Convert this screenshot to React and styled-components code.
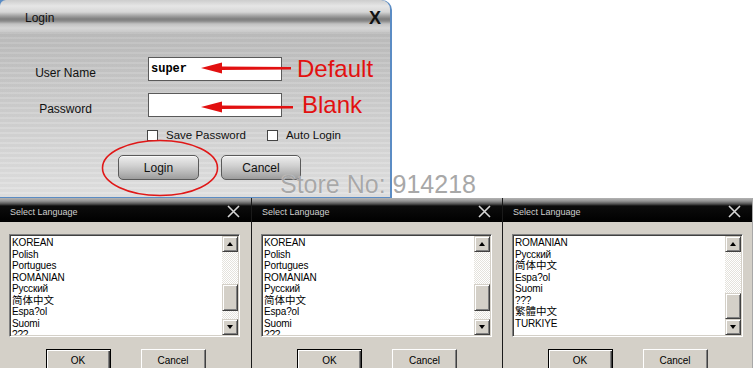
import React from 'react';
import styled, { createGlobalStyle } from 'styled-components';

const Global = createGlobalStyle`
  html, body { margin: 0; padding: 0; background: #fff; }
  #root { width: 755px; height: 368px; overflow: hidden; }
`;

const Page = styled.div`
  position: relative;
  width: 755px;
  height: 368px;
  overflow: hidden;
  background: #fff;
  display: flex;
  flex-direction: column;
  font-family: "Liberation Sans", Arial, sans-serif;
`;

const TopRow = styled.div`
  display: flex;
  height: 198px;
  flex: none;
`;

const Frame = styled.div`
  width: 392px;
  height: 198px;
  box-sizing: border-box;
  background: #5b8cc4;
  border-top-right-radius: 10px;
  padding: 0 2px 1px 0;
`;

const LoginDialog = styled.div`
  position: relative;
  height: 100%;
  border-top-left-radius: 6px;
  border-top-right-radius: 9px;
  overflow: hidden;
  display: flex;
  flex-direction: column;
`;

const LoginTitle = styled.div`
  height: 32px;
  flex: none;
  box-sizing: border-box;
  display: flex;
  align-items: center;
  justify-content: space-between;
  padding: 3px 9px 0 25px;
  background: linear-gradient(180deg, #cdcdcd 0, #e6e6e6 6px, #d6d6d6 12px, #a0a0a0 16px, #7e7e7e 19px, #8a8a8a 21px, #c2c2c2 24px, #d6d6d6 28px, #c9c9c9 32px);
  font-size: 12px;
  color: #111;
`;

const CloseX = styled.span`
  font-size: 18px;
  font-weight: bold;
  color: #111;
  line-height: 1;
`;

const LoginBody = styled.div`
  flex: 1;
  padding-top: 25px;
  display: flex;
  flex-direction: column;
  background:
    repeating-linear-gradient(180deg, rgba(255,255,255,0.07) 0 2px, rgba(0,0,0,0.025) 2px 5px),
    linear-gradient(180deg, #bdbdbd 0%, #cfcfcf 45%, #e2e2e2 100%);
`;

const FormGrid = styled.div`
  display: grid;
  grid-template-columns: 131px 134px auto;
  grid-auto-rows: 24px;
  column-gap: 17px;
  row-gap: 12px;
  align-items: center;
`;

const FieldLabel = styled.div`
  text-align: center;
  font-size: 12px;
  color: #111;
  padding-top: 8px;
`;

const TextInput = styled.div`
  height: 24px;
  box-sizing: border-box;
  background: #fff;
  border: 1px solid #5a5a5a;
  display: flex;
  align-items: center;
  padding-left: 2px;
  font-family: "Liberation Mono", "Courier New", monospace;
  font-weight: bold;
  font-size: 12px;
  color: #000;
`;

const Annotation = styled.div`
  margin-left: ${p => p.$shift}px;
  font-size: 24px;
  color: #e21010;
  line-height: 24px;
  white-space: nowrap;
`;

const CheckRow = styled.div`
  margin: 12px 0 0 147px;
  height: 12px;
  display: flex;
  align-items: center;
  font-size: 11.5px;
  color: #111;
`;

const CheckBox = styled.span`
  width: 11px;
  height: 11px;
  box-sizing: border-box;
  background: #fff;
  border: 1px solid #444;
  margin-right: 8px;
  margin-left: ${p => p.$gap || 0}px;
`;

const ButtonRow = styled.div`
  margin: 14px 0 0 118px;
  display: flex;
  gap: 22px;
`;

const GlossButton = styled.div`
  width: ${p => p.$w}px;
  height: 25px;
  box-sizing: border-box;
  border-radius: 5px;
  border: 1px solid #5a5a5a;
  background: linear-gradient(180deg, #eeeeee 0%, #d2d2d2 40%, #b4b4b4 75%, #9c9c9c 100%);
  box-shadow: inset 0 1px 0 #fafafa;
  display: flex;
  align-items: center;
  justify-content: center;
  font-size: 12px;
  color: #111;
`;

const Overlay = styled.svg`
  position: absolute;
  left: 0;
  top: 0;
  pointer-events: none;
`;

const Watermark = styled.div`
  position: absolute;
  left: 280px;
  top: 172px;
  font-size: 25px;
  line-height: 25px;
  color: #a8a8a8;
  white-space: nowrap;
  text-shadow: 0 0 1px rgba(255,255,255,0.8);
`;

const LangRow = styled.div`
  display: grid;
  grid-template-columns: 252px 251px 250px;
  flex: 1;
  min-height: 0;
`;

const LangPanel = styled.div`
  display: flex;
  flex-direction: column;
  background: #d4d0c8;
  border-right: 1px solid ${p => p.$edge};
  overflow: hidden;
`;

const LangTitle = styled.div`
  height: 24px;
  flex: none;
  box-sizing: border-box;
  display: flex;
  align-items: center;
  justify-content: space-between;
  padding: 3px 11px 0 10px;
  background: linear-gradient(180deg, #b4b4b4 0, #959595 3px, #505050 6px, #0c0c0c 8px, #000 100%);
  color: #cfcfcf;
  font-size: 9px;
`;

const LangBody = styled.div`
  padding: 12px 0 0 9px;
  display: flex;
  flex-direction: column;
`;

const ListBox = styled.div`
  width: 231px;
  height: 103px;
  box-sizing: border-box;
  border: 1px solid;
  border-color: #808080 #ffffff #ffffff #808080;
  box-shadow: inset 1px 1px 0 #404040, inset -1px -1px 0 #d4d0c8;
  padding: 1px;
  background: #fff;
  display: flex;
`;

const Items = styled.div`
  flex: 1;
  overflow: hidden;
  padding: 1px 0 0 1px;
  font-family: "Liberation Sans", "Noto Sans CJK SC", sans-serif;
  font-size: 10px;
  line-height: 11.5px;
  color: #000;
`;

const Item = styled.div`
  white-space: nowrap;
  font-size: ${p => (p.$cjk ? '10.5px' : '10px')};
  letter-spacing: ${p => (p.$cjk ? '0' : '-0.15px')};
`;

const ScrollBar = styled.div`
  width: 16px;
  flex: none;
  display: flex;
  flex-direction: column;
  background: repeating-conic-gradient(#ffffff 0 25%, #e4e2dc 0 50%) 0 0 / 2px 2px;
`;

const Bevel = styled.div`
  box-sizing: border-box;
  background: #d4d0c8;
  border: 1px solid;
  border-color: #d4d0c8 #404040 #404040 #d4d0c8;
  box-shadow: inset 1px 1px 0 #fff, inset -1px -1px 0 #808080;
`;

const ScrollBtn = styled(Bevel)`
  height: 16px;
  flex: none;
  display: flex;
  align-items: center;
  justify-content: center;
`;

const Tri = styled.span`
  width: 0;
  height: 0;
  border-left: 3.5px solid transparent;
  border-right: 3.5px solid transparent;
  ${p => (p.$down ? 'border-top: 4px solid #000;' : 'border-bottom: 4px solid #000;')}
`;

const Track = styled.div`
  flex: 1;
  display: flex;
  flex-direction: column;
`;

const Thumb = styled(Bevel)`
  margin-top: ${p => p.$top}px;
  height: ${p => p.$h}px;
  flex: none;
`;

const LangButtons = styled.div`
  margin: 12px 0 0 -9px;
  display: flex;
  justify-content: center;
  gap: 30px;
`;

const WinButton = styled.div`
  width: 65px;
  height: 23px;
  box-sizing: border-box;
  background: #d4d0c8;
  display: flex;
  align-items: center;
  justify-content: center;
  font-size: 10px;
  color: #000;
  ${p =>
    p.$default
      ? 'border: 1px solid #000; box-shadow: inset 1px 1px 0 #fff, inset -1px -1px 0 #404040, inset -2px -2px 0 #808080;'
      : 'border: 1px solid; border-color: #fff #404040 #404040 #fff; box-shadow: inset -1px -1px 0 #808080;'}
`;

const listA = ['KOREAN', 'Polish', 'Portugues', 'ROMANIAN', 'Русский', '简体中文', 'Espa?ol', 'Suomi', '???'];
const listB = ['ROMANIAN', 'Русский', '简体中文', 'Espa?ol', 'Suomi', '???', '繁體中文', 'TURKIYE'];
const isCjk = s => /[\u4e00-\u9fff]/.test(s);

function LangDialog({ items, thumbTop, thumbH, edge }) {
  return (
    <LangPanel $edge={edge}>
      <LangTitle>
        <span>Select Language</span>
        <svg width="13" height="13" viewBox="0 0 13 13">
          <path d="M1 1 L12 12 M12 1 L1 12" stroke="#d6d6d6" strokeWidth="1.6" />
        </svg>
      </LangTitle>
      <LangBody>
        <ListBox>
          <Items>
            {items.map(t => (
              <Item key={t} $cjk={isCjk(t)}>{t}</Item>
            ))}
          </Items>
          <ScrollBar>
            <ScrollBtn><Tri /></ScrollBtn>
            <Track>
              <Thumb $top={thumbTop} $h={thumbH} />
            </Track>
            <ScrollBtn><Tri $down /></ScrollBtn>
          </ScrollBar>
        </ListBox>
        <LangButtons>
          <WinButton $default>OK</WinButton>
          <WinButton>Cancel</WinButton>
        </LangButtons>
      </LangBody>
    </LangPanel>
  );
}

export default function App() {
  return (
    <Page>
      <Global />
      <TopRow>
        <Frame>
          <LoginDialog>
            <LoginTitle>
              <span>Login</span>
              <CloseX>X</CloseX>
            </LoginTitle>
            <LoginBody>
              <FormGrid>
                <FieldLabel>User Name</FieldLabel>
                <TextInput>super</TextInput>
                <Annotation $shift={-2}>Default</Annotation>
                <FieldLabel>Password</FieldLabel>
                <TextInput />
                <Annotation $shift={3}>Blank</Annotation>
              </FormGrid>
              <CheckRow>
                <CheckBox />
                <span>Save Password</span>
                <CheckBox $gap={21} />
                <span>Auto Login</span>
              </CheckRow>
              <ButtonRow>
                <GlossButton $w={81}>Login</GlossButton>
                <GlossButton $w={80}>Cancel</GlossButton>
              </ButtonRow>
            </LoginBody>
            <Overlay width="390" height="197" viewBox="0 0 390 197">
              <path d="M220 66.5 L291 67 L291 69.5 L220 70 Z" fill="#e21010" />
              <path d="M201 68 L222 62.5 L222 73.5 Z" fill="#e21010" />
              <path d="M220 105.5 L293 106 L293 108.5 L220 109 Z" fill="#e21010" />
              <path d="M201 107 L222 101.5 L222 112.5 Z" fill="#e21010" />
              <ellipse cx="160" cy="168" rx="57.5" ry="27.5" fill="none" stroke="#e01818" strokeWidth="1.6" />
            </Overlay>
          </LoginDialog>
        </Frame>
      </TopRow>
      <LangRow>
        <LangDialog items={listA} thumbTop={32} thumbH={27} edge="#1a1a1a" />
        <LangDialog items={listA} thumbTop={32} thumbH={27} edge="#1a1a1a" />
        <LangDialog items={listB} thumbTop={41} thumbH={26} edge="#a8a8a8" />
      </LangRow>
      <Watermark>Store No: 914218</Watermark>
    </Page>
  );
}
